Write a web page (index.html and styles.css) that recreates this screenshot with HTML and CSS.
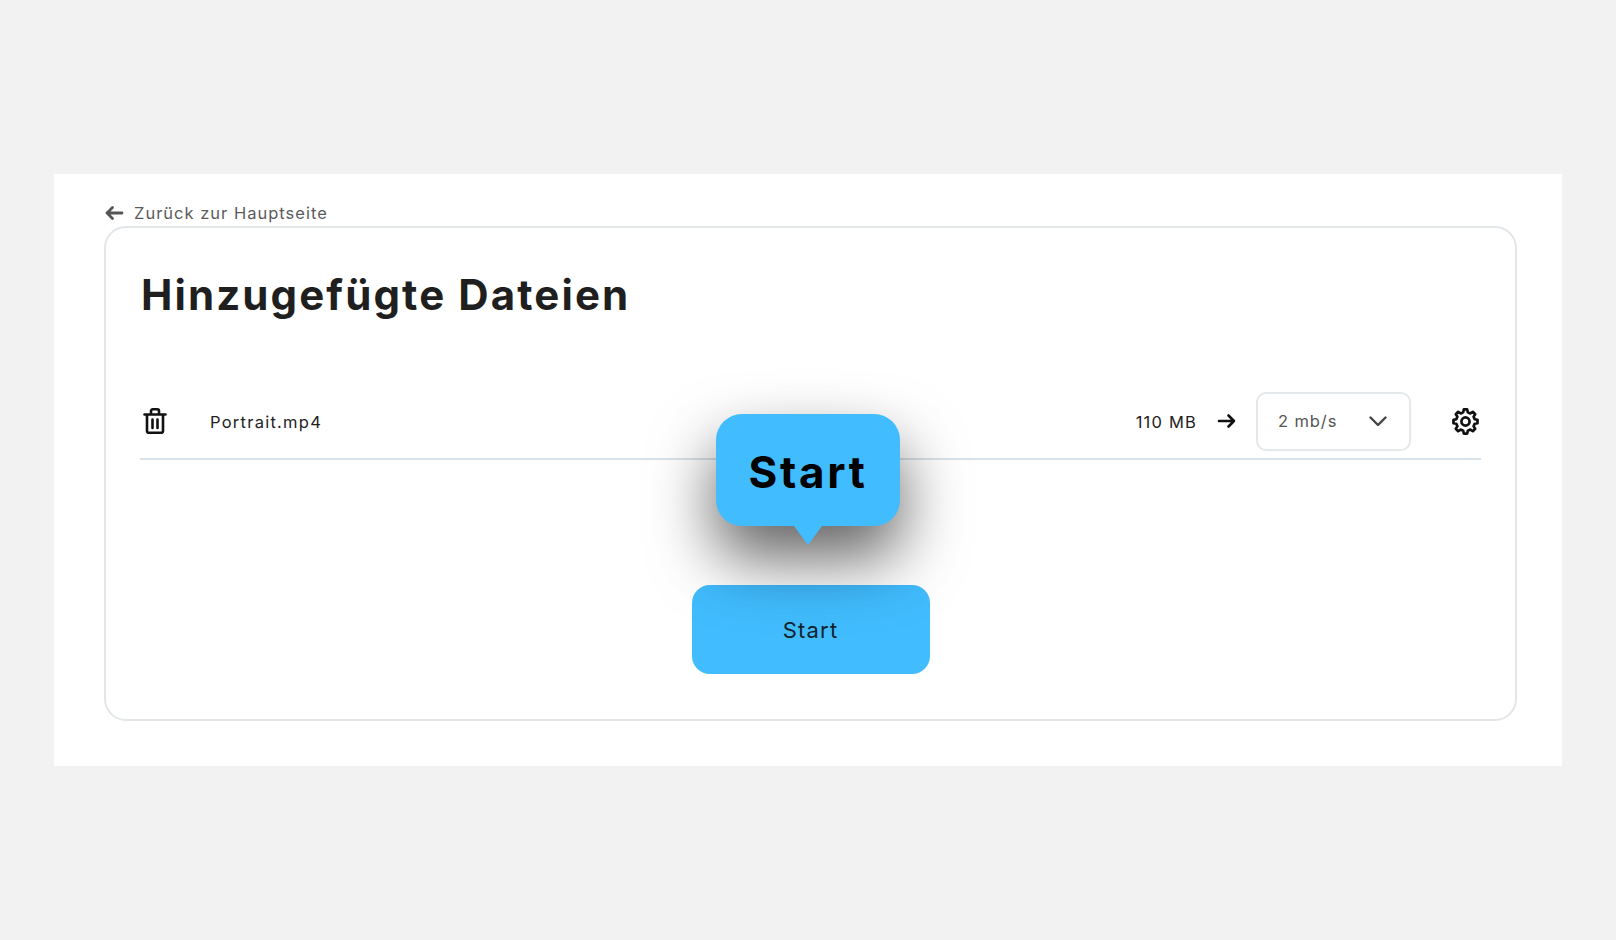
FILE: index.html
```html
<!DOCTYPE html>
<html lang="de">
<head>
    <meta charset="UTF-8">
    <title>Hinzugefügte Dateien</title>
    <link rel="stylesheet" href="styles.css">
</head>
<body>
    <div class="panel">
        <a class="back-link" href="#">
            <svg class="back-arrow" viewBox="0 0 20 16" width="20" height="16" fill="none" stroke="#555" stroke-width="2.8" stroke-linecap="round" stroke-linejoin="round"><path d="M18 8H3M8.500 2.500 3 8l5.500 5.500"/></svg>
            <span>Zurück zur Hauptseite</span>
        </a>
        <div class="card">
            <h1>Hinzugefügte Dateien</h1>
            <div class="file-row">
                <svg class="trash-icon" viewBox="0 0 24 26" width="24" height="26" fill="none" stroke="#111" stroke-width="2.600" stroke-linecap="round" stroke-linejoin="round"><path d="M1.500 6.500h21M8 6.500V3A1.700 1.700 0 0 1 9.700 1.300h4.600A1.700 1.700 0 0 1 16 3v3.500M4 6.500V23a1.800 1.800 0 0 0 1.800 1.800h12.400A1.800 1.800 0 0 0 20 23V6.500M9.500 11.500v8.500M14.500 11.500v8.500"/></svg>
                <span class="file-name">Portrait.mp4</span>
                <span class="file-size">110 MB</span>
                <svg class="size-arrow" viewBox="0 0 20 16" width="20" height="16" fill="none" stroke="#111" stroke-width="2.600" stroke-linecap="round" stroke-linejoin="round"><path d="M2 8h15M11.500 2.500 17 8l-5.500 5.500"/></svg>
                <div class="speed-select">
                    <span>2 mb/s</span>
                    <svg viewBox="0 0 18 11" width="18" height="11" fill="none" stroke="#444" stroke-width="2.400" stroke-linecap="round" stroke-linejoin="round"><path d="M1.500 1.500 9 9l7.500-7.500"/></svg>
                </div>
                <svg class="gear-icon" viewBox="0 0 24 24" width="27" height="27" fill="none" stroke="#111" stroke-width="2.400" stroke-linejoin="round"><circle cx="12" cy="12" r="3.600"/><polygon points="22.69,13.5 20.15,14.03 19.2,16.33 20.63,18.5 18.5,20.63 16.33,19.2 14.03,20.15 13.5,22.69 10.5,22.69 9.97,20.15 7.67,19.2 5.5,20.63 3.37,18.5 4.8,16.33 3.85,14.03 1.31,13.5 1.31,10.5 3.85,9.97 4.8,7.67 3.37,5.5 5.5,3.37 7.67,4.8 9.97,3.85 10.5,1.31 13.5,1.31 14.03,3.85 16.33,4.8 18.5,3.37 20.63,5.5 19.2,7.67 20.15,9.97 22.69,10.5"/></svg>
            </div>
            <div class="actions">
                <button class="start-btn" type="button">Start</button>
            </div>
            <div class="tooltip">Start</div>
        </div>
    </div>
</body>
</html>
```

FILE: styles.css
```css
* {
    box-sizing: border-box;
}
body {
    margin: 0;
    min-height: 940px;
    padding: 174px 54px 0;
    background-color: #f2f2f2;
    font-family: "Inter", "Liberation Sans", sans-serif;
}
.panel {
    height: 592px;
    padding: 27px 45px 0 50px;
    background-color: #fff;
}
.back-link {
    display: flex;
    align-items: center;
    gap: 10px;
    height: 25px;
    padding-bottom: 2px;
    color: #5b5b5b;
    font-size: 16.500px;
    letter-spacing: 1px;
    text-decoration: none;
}
.card {
    position: relative;
    height: 495px;
    padding: 0 34px;
    border: 2px solid #e2e6e8;
    border-radius: 22px;
}
h1 {
    margin: 0;
    padding: 41px 0 0 1px;
    height: 164px;
    color: #1f1f1f;
    font-size: 42px;
    font-weight: 700;
    line-height: 52px;
    letter-spacing: 2.100px;
}
.file-row {
    display: flex;
    align-items: center;
    height: 68px;
    padding-bottom: 8px;
    border-bottom: 2px solid #d9e2e8;
}
.trash-icon {
    margin-left: 3px;
}
.file-name {
    margin: 2px 0 0 43px;
    flex: 1;
    color: #222;
    font-size: 16.500px;
    letter-spacing: 1.250px;
}
.file-size {
    margin-top: 2px;
    color: #222;
    font-size: 16.500px;
    letter-spacing: 1.200px;
}
.size-arrow {
    margin: 0 19px 0 20px;
}
.speed-select {
    display: flex;
    align-items: center;
    justify-content: space-between;
    width: 155px;
    height: 59px;
    padding: 0 22px 0 20px;
    border: 2px solid #e4e8ea;
    border-radius: 10px;
    color: #555;
    font-size: 16.500px;
    letter-spacing: .9px;
}
.gear-icon {
    margin: 0 2px 0 41px;
}
.actions {
    display: flex;
    justify-content: center;
    padding-top: 125px;
}
.start-btn {
    width: 238px;
    height: 89px;
    border: 0;
    border-radius: 18px;
    background-color: #41bcfe;
    color: #12222c;
    font-family: "Inter", sans-serif;
    font-size: 22px;
    letter-spacing: 1.200px;
}
.tooltip {
    position: absolute;
    left: 610px;
    top: 186px;
    display: flex;
    align-items: center;
    justify-content: center;
    width: 184px;
    height: 112px;
    padding-top: 3px;
    border-radius: 26px;
    background-color: #41bcfe;
    box-shadow: 0 32px 64px rgba(0, 0, 0, .62);
    color: #000;
    font-size: 44px;
    font-weight: 700;
    letter-spacing: 2.700px;
}
.tooltip::after {
    content: "";
    position: absolute;
    left: 50%;
    bottom: -19px;
    margin-left: -14px;
    border-top: 19px solid #41bcfe;
    border-left: 14px solid transparent;
    border-right: 14px solid transparent;
}
```
